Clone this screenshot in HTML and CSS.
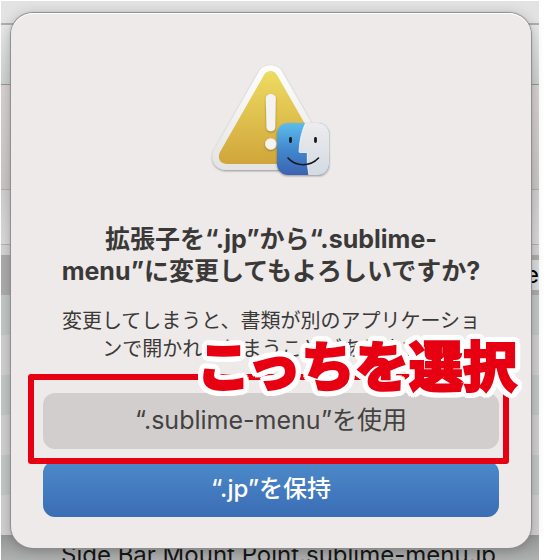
FILE: index.html
```
<!DOCTYPE html>
<html lang="ja">
<head>
<meta charset="utf-8">
<title>拡張子の変更</title>
<link rel="stylesheet" href="styles.css">
</head>
<body>
<main class="desktop">
  <div class="window">
    <div class="titlebar"></div>
    <div class="toolbar"></div>
    <div class="tabs"></div>
    <div class="header"></div>
    <div class="spacer"></div>
    <div class="row row-selected"><span class="rename">e</span></div>
    <div class="row row-alt"></div>
    <div class="row"></div>
    <div class="row row-alt"></div>
    <div class="row"></div>
    <div class="row row-alt"></div>
    <div class="row"></div>
    <div class="row row-file"><span class="file-name">Side Bar Mount Point.sublime-menu.jp</span></div>
  </div>

  <section class="dialog" role="alertdialog" aria-labelledby="title" aria-describedby="message">
    <svg class="alert-icon" viewBox="0 0 124 120" aria-hidden="true">
      <defs>
        <linearGradient id="rim" x1="0" y1="0" x2="0" y2="1"><stop offset="0" stop-color="#fff"/><stop offset="1" stop-color="#e3e3e2"/></linearGradient>
        <linearGradient id="gold" x1="0" y1="0" x2="0" y2="1"><stop offset="0" stop-color="#eedc62"/><stop offset="1" stop-color="#d0a53a"/></linearGradient>
        <linearGradient id="blue" x1="0" y1="0" x2="0" y2="1"><stop offset="0" stop-color="#5dbdeb"/><stop offset=".5" stop-color="#4289cf"/><stop offset="1" stop-color="#3b62b2"/></linearGradient>
        <linearGradient id="face" x1="0" y1="0" x2="0" y2="1"><stop offset="0" stop-color="#eeecee"/><stop offset="1" stop-color="#d2dae3"/></linearGradient>
        <filter id="shade" x="-20%" y="-20%" width="140%" height="150%"><feDropShadow dx="0" dy="1" stdDeviation="1" flood-color="#000" flood-opacity=".38"/></filter>
        <filter id="mark" x="-50%" y="-20%" width="200%" height="150%"><feDropShadow dx="0" dy="1" stdDeviation=".8" flood-color="#6c5510" flood-opacity=".6"/></filter>
        <clipPath id="tile"><rect x="68" y="62" width="52" height="52" rx="11"/></clipPath>
      </defs>
      <path filter="url(#shade)" fill="url(#rim)" d="M50 10.500C54 2.500 69 2.500 73 10.500L117 87.500C123 98 117 109 105 109H18C5 109 0 98 6 87.500Z"/>
      <path fill="url(#gold)" d="M55 14C58 8.500 65 8.500 68 14L112 91C115.500 97 112 103 105 103H18C11 103 8 97 11 91Z"/>
      <g filter="url(#mark)" fill="#f4f3f2">
        <path d="M56.800 37.500C56.800 31.500 66.800 31.500 66.800 37.500L66.200 66.500C66 71.500 57.700 71.500 57.500 66.500Z"/>
        <circle cx="61.800" cy="83" r="5.800"/>
      </g>
      <g filter="url(#shade)">
        <g clip-path="url(#tile)">
          <rect x="68" y="62" width="52" height="52" fill="url(#blue)"/>
          <path fill="url(#face)" d="M97 61C93 69 90.500 79 90 90.500Q90 91.500 91 91.500H98.300Q97.500 103 100 115H121V61Z"/>
          <path fill="none" stroke="#fff" stroke-width=".7" d="M97 61C93 69 90.500 79 90 90.500Q90 91.500 91 91.500H98.300Q97.500 103 100 115"/>
        </g>
      </g>
      <g fill="none" stroke="#15191d" stroke-linecap="round">
        <path stroke-width="2.800" d="M81.500 77.500V80.500M106.500 77.500V80.500"/>
        <path stroke-width="1.600" d="M79 97C87 106 101 106 109.500 97"/>
      </g>
    </svg>
    <h1 class="title" id="title">拡張子を“.jp”から“.sublime-<br>menu”に変更してもよろしいですか?</h1>
    <p class="message" id="message">変更してしまうと、書類が別のアプリケーショ<br>ンで開かれてしまうことがあります。</p>
    <div class="actions">
      <button class="button" type="button">“.sublime-menu”を使用</button>
      <button class="button button-primary" type="button">“.jp”を保持</button>
      <div class="highlight"><span class="callout">こっちを選択</span></div>
    </div>
  </section>
</main>
</body>
</html>
```
FILE: styles.css
```
* {
  box-sizing: border-box;
}

body {
  margin: 0;
  background: #fff;
  color: #3b3938;
  font-family: Inter, "Noto Sans CJK JP", sans-serif;
}

.desktop {
  display: grid;
  height: 100vh;
  padding: 1px 15px 0 1px;
  overflow: hidden;
}

.window,
.dialog {
  grid-area: 1 / 1;
}

.window {
  overflow: hidden;
  background: #d4d4d4;
}

.titlebar {
  height: 24px;
  border-bottom: 2px solid #adafaf;
  background: #e3e3e3;
}

.toolbar {
  height: 60px;
  border-bottom: 1px solid #969898;
  background: linear-gradient(#e8e8e8, #cdd1cf);
}

.tabs {
  height: 105px;
  border-bottom: 1px solid #b0aeae;
  background: linear-gradient(#d8d2d2, #cbc6c6);
}

.header {
  height: 55px;
  border-bottom: 1px solid #b2b2b2;
  background: linear-gradient(#d0d0d0, #dadada);
}

.spacer {
  height: 10px;
}

.row {
  display: flex;
  align-items: center;
  height: 40px;
  background: #d0d0d0;
}

.row-alt {
  background: #c3c7c5;
}

.row-selected {
  justify-content: flex-end;
  background: #acacac;
}

.rename {
  width: 40px;
  background: #dcdcdc;
  color: #000;
  font-size: 24px;
  line-height: 30px;
  text-align: right;
}

.row-file {
  padding-left: 60px;
  background: linear-gradient(#969797, #bebfbf);
  color: #161616;
  font-size: 24px;
  line-height: 40px;
  white-space: nowrap;
}

.dialog {
  z-index: 1;
  align-self: start;
  margin: 12px 8px 0 10px;
  padding: 48px 32px 31px;
  border-radius: 22px;
  background: #edeae9;
  box-shadow: inset 0 1px 0 #fff, 0 0 1px 1px #8c8c8c, 0 2px 14px rgba(0, 0, 0, .25);
  text-align: center;
}

.alert-icon {
  display: block;
  width: 124px;
  height: 120px;
  margin: 0 auto 42px;
}

.title {
  margin: 0 0 20px;
  font-size: 25px;
  font-weight: 700;
  line-height: 32px;
  white-space: nowrap;
}

.message {
  margin: 0 0 30px;
  font-size: 20px;
  line-height: 28px;
  white-space: nowrap;
}

.actions {
  position: relative;
  display: grid;
  gap: 12px;
}

.button {
  height: 56px;
  padding: 0 0 6px;
  border: 0;
  border-radius: 12px;
  background: #d1cecd;
  color: #444241;
  font: inherit;
  font-size: 25px;
}

.button-primary {
  background: linear-gradient(#4d8aca, #3a6db5);
  color: #fff;
  font-size: 24px;
  font-weight: 500;
}

.highlight {
  position: absolute;
  inset: -19px -10px 53px -15px;
  border: 6px solid #e60012;
  border-radius: 3px;
}

.callout {
  position: absolute;
  right: -14px;
  bottom: 64px;
  z-index: 1;
  color: #e60012;
  font-family: "Noto Sans CJK JP", sans-serif;
  font-size: 54px;
  font-weight: 900;
  line-height: 60px;
  white-space: nowrap;
  -webkit-text-stroke: 2px #e60012;
  text-shadow:
    6px 0 #fff, 6px 2px #fff, 5px 4px #fff, 4px 5px #fff, 2px 6px #fff,
    0 6px #fff, -2px 6px #fff, -4px 5px #fff, -5px 4px #fff, -6px 2px #fff,
    -6px 0 #fff, -6px -2px #fff, -5px -4px #fff, -4px -5px #fff, -2px -6px #fff,
    0 -6px #fff, 2px -6px #fff, 4px -5px #fff, 5px -4px #fff, 6px -2px #fff,
    3px 0 #fff, -3px 0 #fff, 0 3px #fff, 0 -3px #fff;
}
```
